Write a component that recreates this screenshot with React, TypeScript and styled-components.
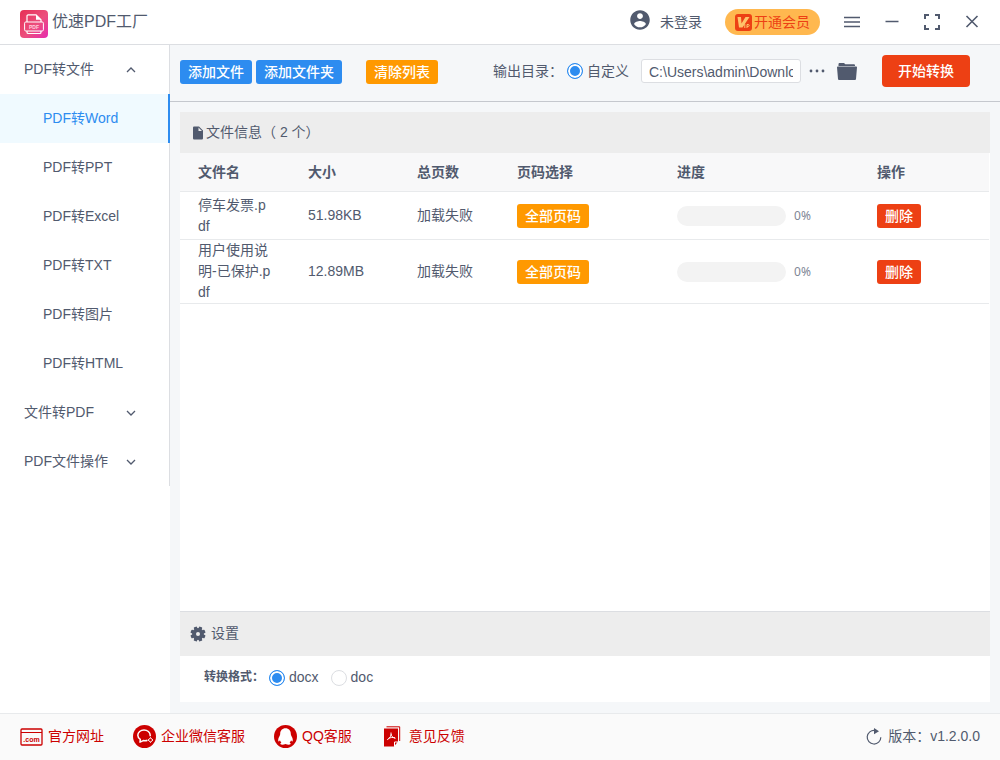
import React, { useState } from "react";
import styled, { createGlobalStyle, css } from "styled-components";
import { IoMdContact, IoMdDocument } from "react-icons/io";

const color = {
  text: "#515a6e",
  line: "#dcdee2",
  softLine: "#e8eaec",
  blue: "#2d8cf0",
  orange: "#ff9900",
  red: "#ed4014",
  crimson: "#cc0000",
};

const GlobalStyle = createGlobalStyle`
  *, *::before, *::after { box-sizing: border-box; }
  body {
    margin: 0;
    background: #fff;
    color: ${color.text};
    font: 14px/21px "Liberation Sans", "Noto Sans CJK SC", sans-serif;
  }
  button, input { font: inherit; color: inherit; }
  button { border: 0; background: none; padding: 0; cursor: pointer; }
  svg { display: block; flex: none; }
`;

const Page = styled.div`
  min-height: 100vh;
  display: flex;
  flex-direction: column;
`;

const TitleBar = styled.header`
  display: flex;
  align-items: center;
  height: 45px;
  padding: 0 20px;
  border-bottom: 1px solid ${color.line};
`;

const Brand = styled.div`
  flex: 1;
  display: flex;
  align-items: center;
  gap: 4px;
  padding-top: 3px;
`;

const Title = styled.h1`
  margin: 0;
  padding-bottom: 3px;
  font-size: 16px;
  line-height: 24px;
  font-weight: 400;
`;

const LoginButton = styled.button`
  display: flex;
  align-items: center;
  gap: 8px;
  margin-right: 23px;

  svg { margin-bottom: 4px; }
`;

const VipButton = styled.button`
  display: flex;
  align-items: center;
  gap: 2px;
  height: 26px;
  margin-right: 22px;
  padding: 0 10px;
  border-radius: 13px;
  background: #ffb84f;
  color: ${color.red};
`;

const WindowControls = styled.div`
  display: flex;
  gap: 20px;
  margin-right: -2px;
`;

const IconButton = styled.button`
  display: grid;
  place-items: center;
  width: 20px;
  height: 20px;
`;

const Body = styled.div`
  flex: 1;
  display: flex;
`;

const Sidebar = styled.aside`
  flex: none;
  width: 170px;
`;

const Menu = styled.nav`
  border-right: 1px solid ${color.line};
`;

const MenuGroup = styled.button`
  display: flex;
  align-items: center;
  justify-content: space-between;
  width: 100%;
  height: 49px;
  padding: 0 33px 0 24px;
`;

const MenuItem = styled.a<{ $active?: boolean }>`
  display: flex;
  align-items: center;
  height: 49px;
  padding-left: 43px;
  color: ${color.text};
  text-decoration: none;
  ${(p) =>
    p.$active &&
    css`
      margin-right: -1px;
      border-right: 2px solid ${color.blue};
      background: #f0faff;
      color: ${color.blue};
    `}
`;

const Main = styled.main`
  flex: 1;
  min-width: 0;
  display: flex;
  flex-direction: column;
  background: #f5f7f9;
`;

const Toolbar = styled.div`
  display: flex;
  align-items: center;
  height: 57px;
  padding: 0 30px 4px 10px;
  border-bottom: 1px solid #c5c8ce;
`;

const ToolGroup = styled.div`
  display: flex;
  align-items: center;
  gap: 4px;
  margin-right: 24px;
  padding-top: 2px;
`;

const OutputGroup = styled.div`
  display: flex;
  align-items: center;
  gap: 4px;
  margin-left: auto;
`;

const OutputActions = styled.div`
  display: flex;
  gap: 10px;
  margin: 0 25px 0 6px;
`;

const Button = styled.button<{ $tone: "blue" | "orange" | "red"; $large?: boolean }>`
  flex: none;
  height: ${(p) => (p.$large ? 32 : 24)}px;
  padding: 0 ${(p) => (p.$large ? 16 : 8)}px;
  border-radius: ${(p) => (p.$large ? 4 : 3)}px;
  background: ${(p) => color[p.$tone]};
  color: #fff;
  font-weight: 500;
  line-height: 24px;
  white-space: nowrap;
`;

const RadioLabel = styled.label`
  display: flex;
  align-items: center;
  gap: 4px;
  margin-right: 12px;
`;

const Radio = styled.input.attrs({ type: "radio" })`
  appearance: none;
  width: 16px;
  height: 16px;
  margin: 0;
  border: 1px solid ${color.line};
  border-radius: 50%;
  background: #fff;

  &:checked {
    border-color: ${color.blue};
    background: ${color.blue};
    box-shadow: inset 0 0 0 2px #fff;
  }
`;

const PathInput = styled.input`
  width: 160px;
  height: 24px;
  margin-left: -4px;
  padding: 1px 7px 0;
  border: 1px solid ${color.line};
  border-radius: 3px;
  background: #fff;
`;

const Content = styled.div`
  flex: 1;
  display: flex;
  flex-direction: column;
  padding: 10px 10px 11px;
`;

const FilePanel = styled.section`
  flex: 1;
  background: #fff;
`;

const PanelHead = styled.h2`
  display: flex;
  align-items: center;
  height: 41px;
  margin: 0;
  padding: 0 10px;
  background: #ededed;
  font-size: 14px;
  font-weight: 400;
`;

const SettingsHead = styled(PanelHead)`
  gap: 5px;
  height: 45px;
  padding-bottom: 1px;
  border-top: 1px solid ${color.line};
`;

const TableWrap = styled.div`
  padding-right: 1px;
`;

const Table = styled.table`
  width: 100%;
  table-layout: fixed;
  border-collapse: separate;
  border-spacing: 0;
`;

const HeadCell = styled.th<{ $width?: number }>`
  width: ${(p) => (p.$width ? `${p.$width}px` : "auto")};
  height: 39px;
  padding: 0 18px;
  border-bottom: 1px solid ${color.softLine};
  background: #f8f8f9;
  text-align: left;
  font-weight: 700;
`;

const Cell = styled.td`
  height: 48px;
  padding: 0 18px;
  border-bottom: 1px solid ${color.softLine};
  word-break: break-all;
`;

const ProgressRow = styled.div`
  display: flex;
  align-items: center;
  gap: 8px;
`;

const ProgressBar = styled.progress`
  appearance: none;
  flex: 1;
  min-width: 0;
  height: 20px;
  border-radius: 10px;
  overflow: hidden;

  &::-webkit-progress-bar { background: #f3f3f3; }
  &::-webkit-progress-value { background: ${color.blue}; }
`;

const Percent = styled.span`
  width: 47px;
  color: #808695;
  font: 12px/20px "Noto Sans", sans-serif;
`;

const Settings = styled.section`
  background: #fff;
`;

const SettingsBody = styled.div`
  display: flex;
  align-items: center;
  height: 46px;
  padding: 0 24px 3px;
`;

const SettingName = styled.span`
  width: 65px;
  white-space: nowrap;
  font-size: 12px;
  font-weight: 700;
`;

const Footer = styled.footer`
  display: flex;
  align-items: center;
  gap: 29px;
  height: 47px;
  padding: 0 20px 1px;
  border-top: 1px solid ${color.softLine};
  background: #fafafa;
`;

const FooterLink = styled.a`
  display: flex;
  align-items: center;
  gap: 5px;
  color: ${color.crimson};
  text-decoration: none;
`;

const Version = styled.div`
  display: flex;
  align-items: center;
  gap: 6px;
  margin-left: auto;
`;

const Logo = () => (
  <svg width="28" height="28" viewBox="0 0 28 28" fill="none">
    <defs>
      <linearGradient id="logo" x1="0" y1="0" x2="1" y2="1">
        <stop offset="0" stopColor="#e62e54" />
        <stop offset="0.55" stopColor="#ec4f7d" />
        <stop offset="1" stopColor="#e62bb0" />
      </linearGradient>
    </defs>
    <rect width="28" height="28" rx="4" fill="url(#logo)" />
    <path d="M7 12V6a1.200 1.200 0 0 1 1.200-1.200H16l5 5V12" stroke="#fff" strokeWidth="1.200" />
    <path d="M16 4.800l5 5h-5z" fill="#fff" />
    <rect x="4.600" y="12" width="18.800" height="9" rx="1.200" stroke="#fff" strokeWidth="1" />
    <path d="M7 21v1.200c0 .8.5 1.300 1.300 1.300h11.400c.8 0 1.300-.5 1.300-1.300V21" stroke="#fff" strokeWidth="1.200" />
    <text x="14" y="18.500" textAnchor="middle" fill="#ffd0de" fontFamily="Liberation Sans, sans-serif" fontSize="5" fontWeight="700">PDF</text>
  </svg>
);

const VipIcon = () => (
  <svg width="17" height="17" viewBox="0 0 17 17">
    <rect width="17" height="17" rx="3" fill={color.red} />
    <path d="M2.500 3H6l.5 6.500L10.500 3h4L7.500 13.500H4z" fill="#ffc46b" />
    <path d="M9.800 10v4M12 14v-3.500h1.300a.9.9 0 0 1 0 1.900H12" stroke="#ffc46b" fill="none" />
  </svg>
);

const Stroke = ({ d, w = 16, h = 16, sw = 1.5 }: { d: string; w?: number; h?: number; sw?: number }) => (
  <svg width={w} height={h} viewBox={`0 0 ${w} ${h}`} fill="none" stroke="currentColor" strokeWidth={sw}>
    <path d={d} />
  </svg>
);

const Chevron = ({ up }: { up?: boolean }) => (
  <Stroke w={10} h={6} sw={1.3} d={up ? "M1 5l4-4 4 4" : "M1 1l4 4 4-4"} />
);

const DotsIcon = () => (
  <svg width="16" height="4" viewBox="0 0 16 4" fill="currentColor">
    <circle cx="2" cy="2" r="1.400" />
    <circle cx="8" cy="2" r="1.400" />
    <circle cx="14" cy="2" r="1.400" />
  </svg>
);

const FolderIcon = () => (
  <svg width="20" height="17" viewBox="0 0 20 17" fill="currentColor">
    <path d="M1.500 3V1.200C1.500.5 2 0 2.700 0H7l1.300 1.300h8.500c.7 0 1.200.4 1.200 1.100V3z" />
    <path d="M.8 3.500h18.400c.5 0 .8.4.8.8l-1 11.700c-.1.600-.4 1-1 1H2c-.6 0-.9-.4-1-1L0 4.300c0-.4.3-.8.8-.8z" />
  </svg>
);

const GearIcon = () => (
  <svg width="16" height="16" viewBox="-8 -8 16 16" fill="currentColor">
    {[22.5, 67.5, 112.5, 157.5].map((a) => (
      <rect key={a} x="-1.700" y="-7.600" width="3.400" height="15.200" rx="0.800" transform={`rotate(${a})`} />
    ))}
    <circle r="5.900" />
    <circle r="2" fill="#ededed" />
  </svg>
);

const ComIcon = () => (
  <svg width="23" height="18" viewBox="0 0 23 18" fill="none" stroke="currentColor">
    <rect x="1" y="1" width="21" height="16" rx="1" strokeWidth="1.300" />
    <path d="M1 4.500h21" />
    <text x="11.500" y="14" textAnchor="middle" stroke="none" fill="currentColor" fontFamily="Liberation Sans, sans-serif" fontSize="7" fontWeight="700">.com</text>
  </svg>
);

const ChatIcon = () => (
  <svg width="23" height="23" viewBox="0 0 23 23" fill="none">
    <circle cx="11.500" cy="11.500" r="11.500" fill="currentColor" />
    <path d="M14.500 15.300c-1.200.5-2.700.600-4.200.3L7 17.200l.3-2.800C5.600 13.300 4.800 11.900 4.800 10.300c0-3 2.800-5.300 6.200-5.300s6.200 2.300 6.200 5.300v1" stroke="#fff" strokeWidth="1.500" strokeLinejoin="round" />
    <path d="M17.500 12.500l1 1.500 1.500 1-1.500 1-1 1.500-1-1.500-1.500-1 1.500-1z" stroke="#fff" />
  </svg>
);

const PenguinIcon = () => (
  <svg width="23" height="23" viewBox="0 0 23 23">
    <circle cx="11.500" cy="11.500" r="11.500" fill="currentColor" />
    <path d="M11.500 3.300c-3.300 0-5.300 2.400-5.300 5.500 0 .8-.1 1.300-.6 2.200-1 1.700-1.700 3.600-1.300 5.100.2.700 1 .2 1.600-.9.300 1 .8 1.700 1.500 2.300-1 .5-1.300 1.200-.8 1.700.7.700 3.300.6 4.900-.3 1.600.9 4.200 1 4.900.3.500-.5.200-1.200-.8-1.700.7-.6 1.200-1.300 1.500-2.300.6 1.100 1.400 1.600 1.600.9.400-1.500-.3-3.400-1.300-5.100-.5-.9-.6-1.400-.6-2.200 0-3.100-2-5.500-5.300-5.500z" fill="#fff" />
  </svg>
);

const FeedbackIcon = () => (
  <svg width="23" height="21" viewBox="-3 0 23 21" fill="none">
    <path d="M2.500.8h13.200V15" stroke="currentColor" />
    <path d="M0 2.500h14v13L10 20.500H0z" fill="currentColor" />
    <path d="M10.500 20.500V16H14" stroke="#fff" />
    <path d="M7 6.500c.5 3-.8 5.500-3.800 7.300M7 8c.6 2.500 2 3.900 4.500 4.300M4.500 12.400c2-.9 4.300-1.200 6.500-.6" stroke="#fff" />
  </svg>
);

const RefreshIcon = () => (
  <svg width="16" height="17" viewBox="0 0 16 17" fill="none">
    <path d="M9 2.500a6.800 6.800 0 1 0 5.800 6.700" stroke="currentColor" strokeWidth="1.200" />
    <path d="M8 0l5 3.200-5 3z" fill="currentColor" />
  </svg>
);

const targets = ["PDF转Word", "PDF转PPT", "PDF转Excel", "PDF转TXT", "PDF转图片", "PDF转HTML"];

const files = [
  { name: "停车发票.pdf", size: "51.98KB", pages: "加载失败", progress: 0 },
  { name: "用户使用说明-已保护.pdf", size: "12.89MB", pages: "加载失败", progress: 0 },
];

const columns = [
  { label: "文件名", width: 110 },
  { label: "大小", width: 109 },
  { label: "总页数", width: 100 },
  { label: "页码选择", width: 160 },
  { label: "进度", width: 200 },
  { label: "操作" },
];

const links = [
  { label: "官方网址", Icon: ComIcon },
  { label: "企业微信客服", Icon: ChatIcon },
  { label: "QQ客服", Icon: PenguinIcon },
  { label: "意见反馈", Icon: FeedbackIcon },
];

export default function App() {
  const [target, setTarget] = useState(targets[0]);
  const [format, setFormat] = useState("docx");

  return (
    <Page>
      <GlobalStyle />
      <TitleBar>
        <Brand>
          <Logo />
          <Title>优速PDF工厂</Title>
        </Brand>
        <LoginButton>
          <IoMdContact size={24} />
          未登录
        </LoginButton>
        <VipButton>
          <VipIcon />
          开通会员
        </VipButton>
        <WindowControls>
          <IconButton aria-label="菜单"><Stroke d="M0 3.500h16M0 8h16M0 12.500h16" /></IconButton>
          <IconButton aria-label="最小化"><Stroke d="M1.500 7.500h13" /></IconButton>
          <IconButton aria-label="最大化"><Stroke sw={2} d="M1 5V1h4M11 1h4v4M15 11v4h-4M5 15H1v-4" /></IconButton>
          <IconButton aria-label="关闭"><Stroke sw={1.6} d="M2.500 2l11 11M13.500 2l-11 11" /></IconButton>
        </WindowControls>
      </TitleBar>

      <Body>
        <Sidebar>
          <Menu>
            <MenuGroup>PDF转文件<Chevron up /></MenuGroup>
            {targets.map((t) => (
              <MenuItem key={t} href="#" $active={t === target} onClick={() => setTarget(t)}>
                {t}
              </MenuItem>
            ))}
            <MenuGroup>文件转PDF<Chevron /></MenuGroup>
            <MenuGroup>PDF文件操作<Chevron /></MenuGroup>
          </Menu>
        </Sidebar>

        <Main>
          <Toolbar>
            <ToolGroup>
              <Button $tone="blue">添加文件</Button>
              <Button $tone="blue">添加文件夹</Button>
            </ToolGroup>
            <ToolGroup>
              <Button $tone="orange">清除列表</Button>
            </ToolGroup>
            <OutputGroup>
              <span>输出目录：</span>
              <RadioLabel>
                <Radio name="output" defaultChecked />
                自定义
              </RadioLabel>
              <PathInput aria-label="输出目录" defaultValue="C:\Users\admin\Downloads" />
            </OutputGroup>
            <OutputActions>
              <IconButton aria-label="更多"><DotsIcon /></IconButton>
              <IconButton aria-label="打开文件夹"><FolderIcon /></IconButton>
            </OutputActions>
            <Button $tone="red" $large>开始转换</Button>
          </Toolbar>

          <Content>
            <FilePanel>
              <PanelHead>
                <IoMdDocument size={16} />
                文件信息（ {files.length} 个）
              </PanelHead>
              <TableWrap>
                <Table>
                  <thead>
                    <tr>
                      {columns.map((c) => (
                        <HeadCell key={c.label} $width={c.width}>{c.label}</HeadCell>
                      ))}
                    </tr>
                  </thead>
                  <tbody>
                    {files.map((f) => (
                      <tr key={f.name}>
                        <Cell>{f.name}</Cell>
                        <Cell>{f.size}</Cell>
                        <Cell>{f.pages}</Cell>
                        <Cell><Button $tone="orange">全部页码</Button></Cell>
                        <Cell>
                          <ProgressRow>
                            <ProgressBar max={100} value={f.progress} aria-label={f.name} />
                            <Percent>{f.progress}%</Percent>
                          </ProgressRow>
                        </Cell>
                        <Cell><Button $tone="red">删除</Button></Cell>
                      </tr>
                    ))}
                  </tbody>
                </Table>
              </TableWrap>
            </FilePanel>

            <Settings>
              <SettingsHead><GearIcon />设置</SettingsHead>
              <SettingsBody>
                <SettingName>转换格式：</SettingName>
                {["docx", "doc"].map((f) => (
                  <RadioLabel key={f}>
                    <Radio name="format" checked={format === f} onChange={() => setFormat(f)} />
                    {f}
                  </RadioLabel>
                ))}
              </SettingsBody>
            </Settings>
          </Content>
        </Main>
      </Body>

      <Footer>
        {links.map(({ label, Icon }) => (
          <FooterLink key={label} href="#"><Icon />{label}</FooterLink>
        ))}
        <Version><RefreshIcon />版本：v1.2.0.0</Version>
      </Footer>
    </Page>
  );
}
